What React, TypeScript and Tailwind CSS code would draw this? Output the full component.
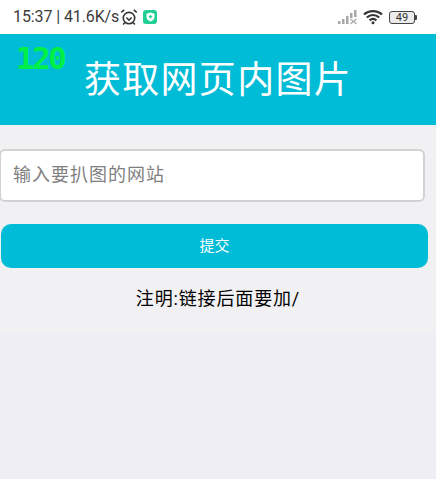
export default function App() {
  const cjk = { fontFamily: '"Roboto","Noto Sans CJK SC",sans-serif' };
  return (
    <div className="relative w-[436px] h-[479px] overflow-hidden bg-[#eeeef4]" style={cjk}>
      <div className="h-[34px] bg-white flex items-center justify-between pl-[13px] pr-[19px]">
        <div className="flex items-center text-[#3c3c3c] text-[16px] leading-none">
          <span className="font-['Roboto'] tracking-[-0.1px]">15:37 | 41.6K/s</span>
          <svg width="18" height="18" viewBox="0 0 17 17" className="ml-[1px]" fill="none" stroke="#333" strokeWidth="1.5">
            <circle cx="8.5" cy="9.5" r="5.4" />
            <path d="M6 9l2.5 2.5L11 9" strokeWidth="1.4" />
            <path d="M1.2 4.2 4 1.8M15.8 4.2 13 1.8M4.4 14l-1.4 1.6M12.6 14l1.4 1.6" />
          </svg>
          <div className="ml-[5px] w-[14px] h-[14px] rounded-[3px] bg-[#1fcf94] flex items-center justify-center">
            <svg width="9" height="10" viewBox="0 0 9 10">
              <path d="M4.5 0.5 8.5 1.8V5c0 2.2-1.8 3.8-4 4.5C2.3 8.800.5 7.200.5 5V1.800Z" fill="#fff" />
              <path d="M4.500 3v3.500M2.800 4.700h3.400" stroke="#1fcf94" strokeWidth="1.200" />
            </svg>
          </div>
        </div>
        <div className="flex items-center">
          <svg width="20" height="16" viewBox="0 0 20 16" fill="#a8a8a8">
            <rect x="0" y="12" width="2.500" height="3" />
            <rect x="4" y="10" width="2.500" height="5" />
            <rect x="8" y="7" width="2.500" height="8" />
            <rect x="12" y="4" width="2.500" height="5" />
            <rect x="16" y="1" width="2.500" height="7" />
            <path d="M12.500 10l6 5M18.500 10l-6 5" stroke="#a8a8a8" strokeWidth="1.200" />
          </svg>
          <svg width="20" height="16" viewBox="0 0 20 16" fill="none" stroke="#333" strokeWidth="2.300" className="ml-[5px]">
            <path d="M1 5.500C6 1 14 1 19 5.500" />
            <path d="M3.800 8.500C7.500 5.300 12.500 5.300 16.200 8.500" />
            <path d="M6.600 11.300C8.700 9.600 11.300 9.600 13.400 11.300" />
            <circle cx="10" cy="13.800" r="1.500" fill="#333" stroke="none" />
          </svg>
          <div className="ml-[6px] flex items-center">
            <div className="w-[26px] h-[13px] rounded-[3px] border border-[#444] flex items-center justify-center text-[11px] leading-none text-[#333] bg-[#ececec] font-['Roboto']">49</div>
            <div className="w-[2px] h-[5px] bg-[#444] rounded-r-[1px]" />
          </div>
        </div>
      </div>

      <div className="relative h-[91px] bg-[#00bcd6] flex items-center justify-center pt-[2px]">
        <div className="absolute left-[16px] top-[9px] text-[#00f048] text-[31px] leading-none font-bold font-['DejaVu_Sans_Mono'] tracking-[-2.5px]">120</div>
        <h1 className="text-white text-[37px] leading-none font-normal tracking-[1.3px]">获取网页内图片</h1>
      </div>

      <div className="h-[208px] bg-[#f1f1f3] pt-[24px]">
        <div className="w-[426px] -ml-[1px] h-[53px] rounded-[6px] border-2 border-[#d2d2d2] bg-white flex items-center pl-[12px] pb-[2px] text-[18px] text-[#808080] tracking-[1px]">
          输入要扒图的网站
        </div>
        <div className="ml-[1px] mt-[22px] w-[427px] h-[44px] rounded-[10px] bg-[#00bcd6] flex items-center justify-center text-white text-[15px]">
          提交
        </div>
        <div className="mt-[21px] text-center text-black text-[18px] leading-[20px] tracking-[0.85px]">注明:链接后面要加/</div>
      </div>
    </div>
  );
}
